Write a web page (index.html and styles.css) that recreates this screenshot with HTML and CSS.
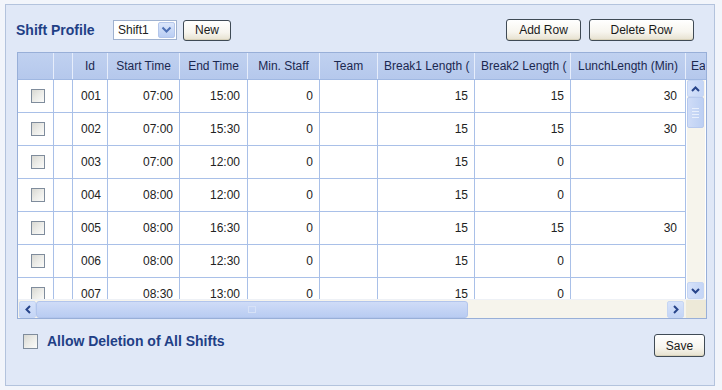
FILE: index.html
```html
<!DOCTYPE html>
<html>
<head>
<meta charset="utf-8">
<link rel="stylesheet" href="styles.css">
</head>
<body>
<div class="panel">
  <div class="toolbar">
    <div class="left-tools">
      <span class="title">Shift Profile</span>
      <div class="select"><span class="select-text">Shift1</span><span class="select-btn"><svg width="11" height="8" viewBox="0 0 11 8"><path d="M1.5 1.5 L5.5 5.5 L9.5 1.5" fill="none" stroke="#4d6fb4" stroke-width="2"/></svg></span></div>
      <button class="btn btn-new">New</button>
    </div>
    <div class="right-tools">
      <button class="btn btn-add">Add Row</button>
      <button class="btn btn-del">Delete Row</button>
    </div>
  </div>

  <div class="grid">
    <div class="head">
      <div class="hc c-chk"></div>
      <div class="hc c-blank"></div>
      <div class="hc c-id">Id</div>
      <div class="hc c-start">Start Time</div>
      <div class="hc c-end">End Time</div>
      <div class="hc c-min">Min. Staff</div>
      <div class="hc c-team">Team</div>
      <div class="hc c-b1"><span class="clip">Break1 Length (Min)</span></div>
      <div class="hc c-b2"><span class="clip">Break2 Length (Min)</span></div>
      <div class="hc c-lunch">LunchLength (Min)</div>
      <div class="hc c-ea"><span class="clip">Early</span></div>
    </div>
    <div class="body-wrap">
      <div class="rows">
        <div class="row"><div class="cell c-chk"><span class="cb"></span></div><div class="cell c-blank"></div><div class="cell c-id">001</div><div class="cell c-start num">07:00</div><div class="cell c-end num">15:00</div><div class="cell c-min num">0</div><div class="cell c-team"></div><div class="cell c-b1 num">15</div><div class="cell c-b2 num">15</div><div class="cell c-lunch num">30</div></div>
        <div class="row"><div class="cell c-chk"><span class="cb"></span></div><div class="cell c-blank"></div><div class="cell c-id">002</div><div class="cell c-start num">07:00</div><div class="cell c-end num">15:30</div><div class="cell c-min num">0</div><div class="cell c-team"></div><div class="cell c-b1 num">15</div><div class="cell c-b2 num">15</div><div class="cell c-lunch num">30</div></div>
        <div class="row"><div class="cell c-chk"><span class="cb"></span></div><div class="cell c-blank"></div><div class="cell c-id">003</div><div class="cell c-start num">07:00</div><div class="cell c-end num">12:00</div><div class="cell c-min num">0</div><div class="cell c-team"></div><div class="cell c-b1 num">15</div><div class="cell c-b2 num">0</div><div class="cell c-lunch num"></div></div>
        <div class="row"><div class="cell c-chk"><span class="cb"></span></div><div class="cell c-blank"></div><div class="cell c-id">004</div><div class="cell c-start num">08:00</div><div class="cell c-end num">12:00</div><div class="cell c-min num">0</div><div class="cell c-team"></div><div class="cell c-b1 num">15</div><div class="cell c-b2 num">0</div><div class="cell c-lunch num"></div></div>
        <div class="row"><div class="cell c-chk"><span class="cb"></span></div><div class="cell c-blank"></div><div class="cell c-id">005</div><div class="cell c-start num">08:00</div><div class="cell c-end num">16:30</div><div class="cell c-min num">0</div><div class="cell c-team"></div><div class="cell c-b1 num">15</div><div class="cell c-b2 num">15</div><div class="cell c-lunch num">30</div></div>
        <div class="row"><div class="cell c-chk"><span class="cb"></span></div><div class="cell c-blank"></div><div class="cell c-id">006</div><div class="cell c-start num">08:00</div><div class="cell c-end num">12:30</div><div class="cell c-min num">0</div><div class="cell c-team"></div><div class="cell c-b1 num">15</div><div class="cell c-b2 num">0</div><div class="cell c-lunch num"></div></div>
        <div class="row"><div class="cell c-chk"><span class="cb"></span></div><div class="cell c-blank"></div><div class="cell c-id">007</div><div class="cell c-start num">08:30</div><div class="cell c-end num">13:00</div><div class="cell c-min num">0</div><div class="cell c-team"></div><div class="cell c-b1 num">15</div><div class="cell c-b2 num">0</div><div class="cell c-lunch num"></div></div>
      </div>
      <div class="vscroll">
        <span class="sbtn"><svg width="9" height="6" viewBox="0 0 9 6"><path d="M1 5 L4.5 1.5 L8 5" fill="none" stroke="#27448a" stroke-width="2"/></svg></span>
        <span class="vthumb"><i></i><i></i><i></i><i></i></span>
        <span class="vtrack"></span>
        <span class="sbtn"><svg width="9" height="6" viewBox="0 0 9 6"><path d="M1 1 L4.5 4.5 L8 1" fill="none" stroke="#27448a" stroke-width="2"/></svg></span>
      </div>
    </div>
    <div class="hscroll">
      <span class="hbtn"><svg width="6" height="9" viewBox="0 0 6 9"><path d="M5 1 L1.5 4.5 L5 8" fill="none" stroke="#27448a" stroke-width="2"/></svg></span>
      <span class="hthumb"><i></i></span>
      <span class="htrack"></span>
      <span class="hbtn hbtn-r"><svg width="6" height="9" viewBox="0 0 6 9"><path d="M1 1 L4.5 4.5 L1 8" fill="none" stroke="#27448a" stroke-width="2"/></svg></span>
      <span class="corner"></span>
    </div>
  </div>

  <div class="footer">
    <label class="allow"><span class="cb cb-big"></span><span class="allow-text">Allow Deletion of All Shifts</span></label>
    <button class="btn btn-save">Save</button>
  </div>
</div>
</body>
</html>
```

FILE: styles.css
```css
* { box-sizing: border-box; }
html, body { margin: 0; padding: 0; }
body {
  width: 722px;
  height: 390px;
  background: #f2f5fb;
  font-family: "Liberation Sans", Arial, sans-serif;
  font-size: 12px;
  color: #1e2a44;
  overflow: hidden;
}
.panel {
  margin: 4px 7px 0 5px;
  height: 382px;
  background: #e0e8f7;
  border: 1px solid #b3c3dd;
  padding: 13px 7px 0 11px;
  display: flex;
  flex-direction: column;
}
.toolbar {
  height: 23px;
  display: flex;
  justify-content: space-between;
  align-items: center;
  margin-bottom: 11px;
}
.left-tools { display: flex; align-items: center; }
.title {
  font-weight: bold;
  font-size: 14px;
  color: #1f3f86;
  margin-left: -1px;
  width: 97px;
}
.select {
  width: 64px;
  height: 20px;
  background: #fff;
  border: 1px solid #9fb1cf;
  display: flex;
  align-items: center;
  margin-top: 1px;
}
.select-text { flex: 1; padding-left: 4px; font-size: 12px; color: #222; }
.select-btn {
  width: 17px;
  height: 16px;
  margin-right: 1px;
  background: linear-gradient(#dbe6fb, #b9cdf3);
  border: 1px solid #b4c6ea;
  border-radius: 2px;
  display: flex;
  align-items: center;
  justify-content: center;
}
.btn {
  font-family: "Liberation Sans", Arial, sans-serif;
  font-size: 12px;
  color: #1a1a1a;
  height: 21px;
  padding: 0;
  border: 1px solid #3f4a55;
  border-radius: 3px;
  background: linear-gradient(#ffffff 0%, #f7f5ee 60%, #e6e1cf 100%);
  box-shadow: inset 0 -1px 0 #d9d2ba;
}
.btn-new { width: 48px; margin-left: 6px; margin-top: 1px; }
.right-tools { display: flex; align-items: center; gap: 8px; margin-right: 13px; }
.btn-add { width: 75px; height: 22px; }
.btn-del { width: 105px; height: 22px; }

.grid {
  width: 690px;
  border: 1px solid #98afd8;
  background: #fff;
  display: flex;
  flex-direction: column;
  overflow: hidden;
}
.head {
  display: flex;
  height: 27px;
  background: linear-gradient(#c0d1f0, #b5c8ec);
  border-bottom: 1px solid #a0b8e2;
}
.hc {
  flex: none;
  height: 100%;
  border-right: 1px solid #e6edfb;
  display: flex;
  align-items: center;
  justify-content: center;
  white-space: nowrap;
  overflow: hidden;
  color: #1b2850;
  font-size: 12px;
}
.clip { display: block; overflow: hidden; white-space: nowrap; }
.c-chk { width: 36px; }
.c-blank { width: 19px; }
.c-id { width: 35px; }
.c-start { width: 72px; }
.c-end { width: 68px; }
.c-min { width: 72px; }
.c-team { width: 58px; }
.c-b1 { width: 97px; }
.c-b2 { width: 96px; }
.c-lunch { width: 115px; }
.c-ea { flex: 1; justify-content: flex-start; padding-left: 5px; border-right: none; }
.hc.c-b1, .hc.c-b2 { justify-content: flex-start; padding-left: 6px; }
.hc.c-b1 .clip, .hc.c-b2 .clip { width: 86px; }
.hc.c-ea .clip { width: 14px; }

.body-wrap { display: flex; height: 219px; }
.rows { width: 668px; overflow: hidden; }
.row { display: flex; height: 33px; }
.cell {
  flex: none;
  height: 33px;
  border-right: 1px solid #a9c0e8;
  border-bottom: 1px solid #a9c0e8;
  display: flex;
  align-items: center;
  color: #222;
  font-size: 12px;
  white-space: nowrap;
}
.cell.c-chk { justify-content: center; padding-left: 4px; }
.cell.c-id { padding-left: 8px; }
.cell.num { justify-content: flex-end; padding-right: 6px; }
.cell.c-end.num { padding-right: 7px; }
.cell.c-lunch.num { padding-right: 8px; }
.cb {
  display: inline-block;
  width: 14px;
  height: 14px;
  border: 1px solid #7f8c9c;
  background: linear-gradient(135deg, #d8d8d2 0%, #ecece8 50%, #fbfbf9 100%);
}

.vscroll {
  width: 18px;
  margin-left: 1px;
  display: flex;
  flex-direction: column;
  background: #f6f4ec;
}
.sbtn {
  height: 17px;
  width: 17px;
  background: linear-gradient(90deg, #d6e2fa, #c4d5f6);
  border: 1px solid #c6d6f3;
  border-radius: 2px;
  display: flex;
  align-items: center;
  justify-content: center;
}
.vthumb {
  height: 31px;
  width: 17px;
  background: linear-gradient(90deg, #cfdcf7, #bccff3);
  border: 1px solid #b7c9ee;
  border-radius: 2px;
  display: flex;
  flex-direction: column;
  align-items: center;
  justify-content: center;
  gap: 2px;
}
.vthumb i { display: block; width: 7px; height: 1px; background: #e8effc; }
.vtrack { flex: 1; }

.hscroll {
  height: 19px;
  display: flex;
  align-items: center;
  background: #f6f4ec;
  border-top: 1px solid #eef1f6;
}
.hbtn {
  width: 17px;
  height: 17px;
  background: linear-gradient(#d6e2fa, #c4d5f6);
  border: 1px solid #c6d6f3;
  border-radius: 2px;
  display: flex;
  align-items: center;
  justify-content: center;
  margin-left: 1px;
}
.hthumb {
  width: 432px;
  height: 17px;
  background: linear-gradient(#cfdcf7, #b9ccf2);
  border: 1px solid #b2c5ec;
  border-radius: 3px;
  display: flex;
  align-items: center;
  justify-content: center;
}
.hthumb i { display: block; width: 8px; height: 7px; border: 1px solid #d6e1f7; }
.htrack { flex: 1; }
.hbtn-r { margin-right: 2px; }
.corner { width: 20px; height: 19px; background: #ede9d8; }

.footer {
  display: flex;
  justify-content: space-between;
  align-items: flex-start;
  margin-top: 14px;
  width: 690px;
}
.allow { display: flex; align-items: center; gap: 9px; padding-left: 6px; }
.cb-big { width: 15px; height: 15px; }
.allow-text { font-weight: bold; font-size: 14px; color: #1f3f86; }
.btn-save { width: 51px; height: 23px; margin-top: 1px; margin-right: 2px; }
```
